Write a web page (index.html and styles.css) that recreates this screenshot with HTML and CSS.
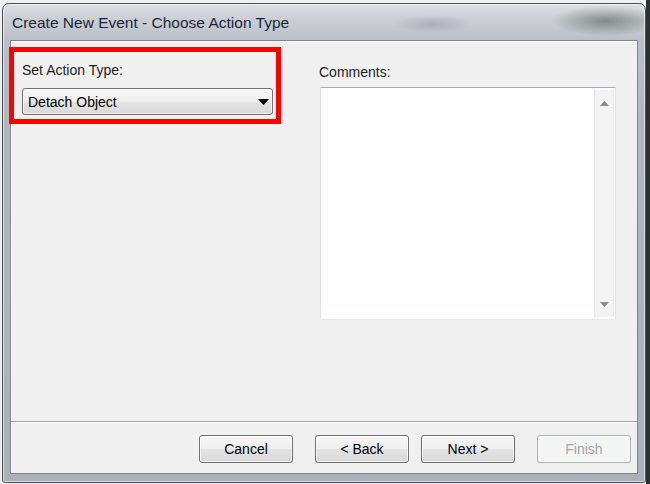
FILE: index.html
```html
<!DOCTYPE html>
<html>
<head>
<meta charset="utf-8">
<title>Create New Event - Choose Action Type</title>
<link rel="stylesheet" href="styles.css">
</head>
<body>
<div class="window">
  <div class="titlebar"><span class="title">Create New Event - Choose Action Type</span></div>
  <div class="client">
    <div class="main">
      <div class="action-group">
        <div class="label">Set Action Type:</div>
        <div class="combo">
          <span class="combo-text">Detach Object</span>
          <svg class="combo-arrow" width="11" height="6" viewBox="0 0 11 6"><path d="M0 0H11L5.5 6Z" fill="#000"/></svg>
        </div>
      </div>
      <div class="comments">
        <div class="label">Comments:</div>
        <div class="textarea">
          <div class="scrollbar">
            <svg width="9" height="5" viewBox="0 0 9 5"><path d="M4.5 0L9 5H0Z" fill="#8a8a8a"/></svg>
            <svg width="9" height="5" viewBox="0 0 9 5"><path d="M0 0H9L4.5 5Z" fill="#8a8a8a"/></svg>
          </div>
        </div>
      </div>
    </div>
    <div class="buttons">
      <button class="btn btn-cancel">Cancel</button>
      <button class="btn btn-back">&lt; Back</button>
      <button class="btn btn-next">Next &gt;</button>
      <button class="btn btn-finish" disabled>Finish</button>
    </div>
  </div>
</div>
</body>
</html>
```

FILE: styles.css
```css
html, body {
  margin: 0;
  height: 100%;
}

body {
  box-sizing: border-box;
  padding: 3px 0 0 2px;
  overflow: hidden;
  font-family: "Liberation Sans", Arial, sans-serif;
  background: linear-gradient(to right, #eef0f2 0, #eef0f2 646px, #2f3030 646px);
}

.window {
  width: 644px;
  height: 480px;
  box-sizing: border-box;
  border: 1px solid #4d5156;
  border-radius: 7px 7px 3px 3px;
  padding: 0 7px 8px 7px;
  display: flex;
  flex-direction: column;
  background:
    radial-gradient(ellipse 55px 15px at 603px 17px, rgba(85, 95, 85, 0.6), rgba(85, 95, 85, 0)),
    radial-gradient(ellipse 40px 9px at 430px 20px, rgba(120, 125, 135, 0.35), rgba(120, 125, 135, 0)),
    linear-gradient(#dcdfe2, #ccd0d5 14px, #bac0c7 36px, #b1b7be 120px, #abb1b8);
  box-shadow: inset 0 0 0 1px rgba(255, 255, 255, 0.55);
}

.titlebar {
  height: 36px;
  display: flex;
  align-items: center;
  padding-left: 2px;
}

.title {
  font-size: 15.5px;
  line-height: 17px;
  color: #1b2738;
}

.client {
  flex: 1;
  display: flex;
  flex-direction: column;
  background: #f0f0f0;
  border: 1px solid #80848a;
  box-shadow: inset 1px 1px 0 #ffffff;
}

.main {
  flex: 1;
  display: flex;
  align-items: flex-start;
  padding-top: 6px;
}

.label {
  font-size: 14px;
  line-height: 16px;
  color: #1e1e1e;
}

.action-group {
  width: 272px;
  height: 77px;
  box-sizing: border-box;
  margin-left: -2px;
  border: 5px solid #ff0000;
  padding: 10px 3px 0 8px;
}

.combo {
  margin-top: 10px;
  height: 27px;
  box-sizing: border-box;
  border: 1px solid #707070;
  border-radius: 3px;
  background: linear-gradient(#f6f6f6, #eeeeee 50%, #e3e3e3 50%, #d9d9d9);
  box-shadow: inset 0 0 0 1px rgba(255, 255, 255, 0.7);
  display: flex;
  align-items: center;
  padding: 0 3px 0 5px;
}

.combo-text {
  flex: 1;
  font-size: 14px;
  color: #000;
}

.combo-arrow {
  display: block;
}

.comments {
  margin-left: 38px;
  padding-top: 17px;
  display: flex;
  flex-direction: column;
}

.textarea {
  margin-top: 7px;
  margin-left: 1px;
  width: 296px;
  height: 233px;
  box-sizing: border-box;
  background: #ffffff;
  border: 1px solid #e2e3ea;
  border-top-color: #abadb3;
  border-bottom-color: #e3e9ef;
  display: flex;
  justify-content: flex-end;
  padding: 2px 1px 2px 0;
}

.scrollbar {
  width: 20px;
  background: linear-gradient(to right, #e3e3e3, #f3f3f3 2px, #f3f3f3 18px, #e6e6e6);
  display: flex;
  flex-direction: column;
  justify-content: space-between;
  align-items: center;
  padding: 11px 0 10px;
  box-sizing: border-box;
}

.scrollbar svg {
  display: block;
}

.buttons {
  height: 52px;
  box-sizing: border-box;
  border-top: 1px solid #a0a0a0;
  box-shadow: inset 0 1px 0 #ffffff;
  display: flex;
  align-items: flex-start;
  justify-content: flex-end;
  padding: 13px 6px 0 0;
}

.btn {
  width: 94px;
  height: 28px;
  box-sizing: border-box;
  border: 1px solid #707070;
  border-radius: 3px;
  background: linear-gradient(#f6f6f6, #eeeeee 50%, #e3e3e3 50%, #d9d9d9);
  box-shadow: inset 0 0 0 1px rgba(255, 255, 255, 0.7);
  font-family: "Liberation Sans", Arial, sans-serif;
  font-size: 14px;
  color: #000;
  padding: 0;
}

.btn-back,
.btn-finish {
  margin-left: 22px;
}

.btn-next {
  margin-left: 12px;
}

.btn-finish {
  background: #f4f4f4;
  border-color: #adb2b5;
  color: #a3a7ab;
}
```
